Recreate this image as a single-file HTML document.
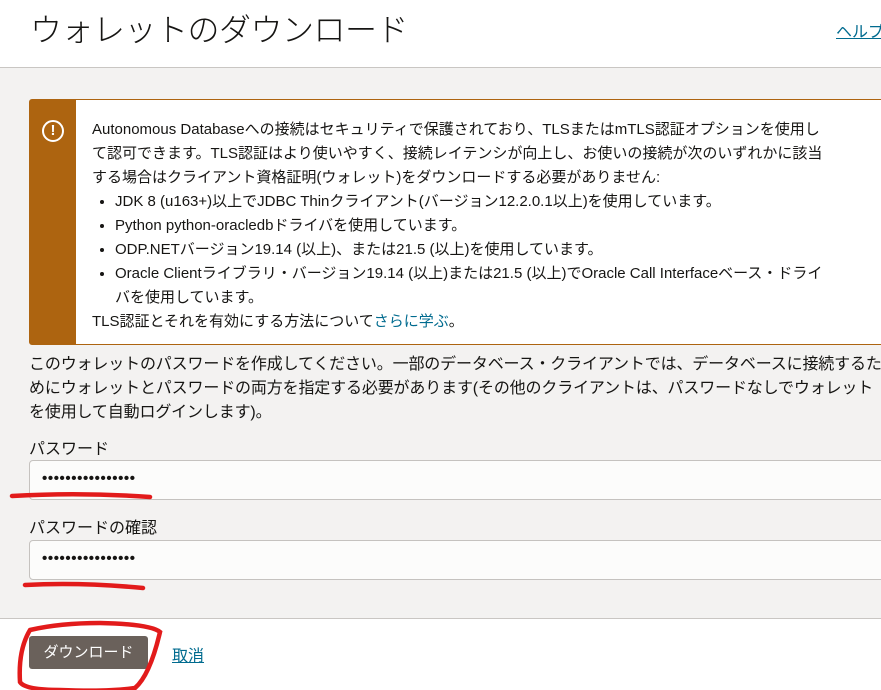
<!DOCTYPE html>
<html><head><meta charset="utf-8"><style>
*{margin:0;padding:0;box-sizing:border-box}
body{width:881px;height:690px;overflow:hidden;background:#fff;font-family:"Liberation Sans","Noto Sans CJK JP",sans-serif;color:#161513;position:relative}
.hdr{position:absolute;left:0;top:0;width:881px;height:68px;border-bottom:1px solid #c9c6c3;background:#fff}
.hdr h1{position:absolute;left:30px;top:5px;font-size:32px;font-weight:300;font-family:"Noto Sans CJK JP",sans-serif;letter-spacing:-0.5px}
.help{position:absolute;left:836px;top:18px;font-size:16px;color:#006b8f;text-decoration:underline;white-space:nowrap}
.main{position:absolute;left:0;top:68px;width:881px;height:551px;background:#f3f2f1;border-bottom:1px solid #c9c6c3}
.ban{position:absolute;left:29px;top:31px;width:870px;height:246px;background:#fff;border:1px solid #ad6410;border-radius:3px 0 0 3px}
.strip{position:absolute;left:0;top:0;width:46px;height:100%;background:#ad6410}
.ic{position:absolute;left:12px;top:20px;width:22px;height:22px;border:2px solid #fff;border-radius:50%;color:#fff;font-weight:bold;font-size:15px;text-align:center;line-height:18px}
.bt{position:absolute;left:62px;top:18px;width:742px;font-size:15px;line-height:24px}
.bt ul{margin-left:23px}
.bt a{color:#006b8f}
.p{position:absolute;left:29px;top:285px;width:855px;font-size:16px;line-height:24px;letter-spacing:-0.15px}
.lab{position:absolute;left:29px;font-size:16px}
.inp{position:absolute;left:29px;width:870px;height:40px;background:#fcfcfb;border:1px solid #c5c2bf;border-radius:4px;font-size:15px;padding-left:12px;line-height:36px;letter-spacing:0.6px;font-weight:bold}
.btn{position:absolute;left:29px;top:636px;width:119px;height:33px;background:#6a615b;border-radius:3px;color:#fff;font-size:15px;text-align:center;line-height:33px}
.cancel{position:absolute;left:172px;top:642px;font-size:16px;color:#006b8f;text-decoration:underline}
svg{position:absolute;left:0;top:0}
</style></head><body>
<div class="hdr"><h1>ウォレットのダウンロード</h1><span class="help">ヘルプ</span></div>
<div class="main">
<div class="ban"><div class="strip"><div class="ic">!</div></div>
<div class="bt">Autonomous Databaseへの接続はセキュリティで保護されており、TLSまたはmTLS認証オプションを使用して認可できます。TLS認証はより使いやすく、接続レイテンシが向上し、お使いの接続が次のいずれかに該当する場合はクライアント資格証明(ウォレット)をダウンロードする必要がありません:
<ul><li>JDK 8 (u163+)以上でJDBC Thinクライアント(バージョン12.2.0.1以上)を使用しています。</li>
<li>Python python-oracledbドライバを使用しています。</li>
<li>ODP.NETバージョン19.14 (以上)、または21.5 (以上)を使用しています。</li>
<li>Oracle Clientライブラリ・バージョン19.14 (以上)または21.5 (以上)でOracle Call Interfaceベース・ドライバを使用しています。</li></ul>
TLS認証とそれを有効にする方法について<a>さらに学ぶ</a>。</div></div>
<div class="p">このウォレットのパスワードを作成してください。一部のデータベース・クライアントでは、データベースに接続するためにウォレットとパスワードの両方を指定する必要があります(その他のクライアントは、パスワードなしでウォレット<br>を使用して自動ログインします)。</div>
</div>
<div class="lab" style="top:435px">パスワード</div>
<div class="inp" style="top:460px">••••••••••••••••</div>
<div class="lab" style="top:514px">パスワードの確認</div>
<div class="inp" style="top:540px">••••••••••••••••</div>
<div class="btn">ダウンロード</div>
<span class="cancel">取消</span>
<svg width="881" height="690"><g fill="none" stroke="#e21b1b" stroke-width="4.5" stroke-linecap="round">
<path d="M12 496 Q80 492 150 497"/>
<path d="M25 585 Q80 582 143 588"/>
<path d="M30 630 Q18 650 20 682 Q25 690 60 690 Q110 692 135 688 Q150 675 160 632 Q150 624 100 623 Q60 623 30 630"/>
</g></svg>
</body></html>
